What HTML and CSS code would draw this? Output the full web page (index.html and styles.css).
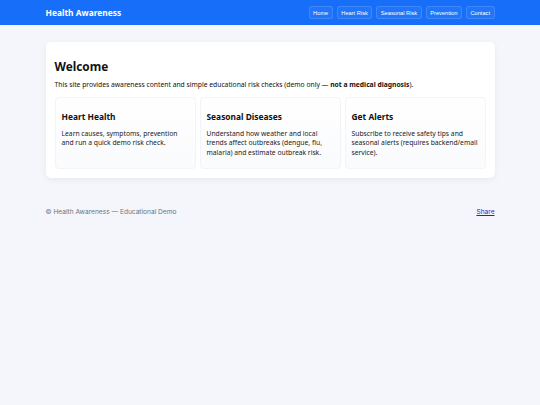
FILE: index.html
```html
<!DOCTYPE html>
<html lang="en">
<head>
    <meta charset="UTF-8">
    <meta name="viewport" content="width=device-width, initial-scale=1.0">
    <title>Health Awareness</title>
    <link rel="stylesheet" href="styles.css">
</head>
<body>
    <header class="topbar">
        <div class="wrap topbar-inner">
            <div class="brand">Health Awareness</div>
            <nav class="nav">
                <button>Home</button>
                <button>Heart Risk</button>
                <button>Seasonal Risk</button>
                <button>Prevention</button>
                <button>Contact</button>
            </nav>
        </div>
    </header>

    <main class="wrap">
        <section class="panel">
            <h1>Welcome</h1>
            <p class="intro">This site provides awareness content and simple educational risk checks (demo only &mdash; <strong>not a medical diagnosis</strong>).</p>

            <div class="grid">
                <div class="card">
                    <h3>Heart Health</h3>
                    <p>Learn causes, symptoms, prevention and run a quick demo risk check.</p>
                </div>
                <div class="card">
                    <h3>Seasonal Diseases</h3>
                    <p>Understand how weather and local trends affect outbreaks (dengue, flu, malaria) and estimate outbreak risk.</p>
                </div>
                <div class="card">
                    <h3>Get Alerts</h3>
                    <p>Subscribe to receive safety tips and seasonal alerts (requires backend/email service).</p>
                </div>
            </div>
        </section>
    </main>

    <footer class="wrap footer">
        <span>&copy; Health Awareness &mdash; Educational Demo</span>
        <a href="#">Share</a>
    </footer>
</body>
</html>
```

FILE: styles.css
```css
body {
    margin: 0;
    background: #f4f6fb;
    font-family: "Noto Sans", sans-serif;
    color: #111;
}
.wrap {
    width: 449px;
    margin: 0 auto;
}
.topbar {
    background: #166ef9;
    height: 25px;
    display: flex;
    align-items: center;
}
.topbar-inner {
    display: flex;
    justify-content: space-between;
    align-items: center;
}
.brand {
    color: #fff;
    font-weight: bold;
    font-size: 8.4px;
}
.nav {
    display: flex;
    gap: 4px;
}
.nav button {
    font-family: "Liberation Sans", Arial, sans-serif;
    font-size: 5.7px;
    color: #fff;
    background: rgba(255, 255, 255, 0.05);
    border: 1px solid rgba(255, 255, 255, 0.14);
    border-radius: 3px;
    height: 13px;
    padding: 0 3.5px;
}
.panel {
    margin-top: 17px;
    background: #fff;
    border-radius: 5px;
    box-shadow: 0 2px 6px rgba(20, 30, 60, 0.06);
    padding: 9px 9px 9px;
}
h1 {
    font-size: 11.8px;
    margin: 7px 0 6px;
}
.intro {
    font-size: 6.75px;
    margin: 0 0 8px;
}
.grid {
    display: grid;
    grid-template-columns: repeat(3, 1fr);
    gap: 4px;
}
.card {
    border: 1px solid #f2f4f8;
    border-radius: 4px;
    background: linear-gradient(#fff, #fafbfd);
    padding: 6px 6px 11px;
}
.card h3 {
    font-size: 8.4px;
    margin: 7px 0 7px;
}
.card p {
    font-size: 6.75px;
    line-height: 9.4px;
    margin: 0;
    color: #222;
}
.footer {
    display: flex;
    justify-content: space-between;
    margin-top: 30px;
    font-family: Inter, sans-serif;
    font-size: 6.6px;
    color: #6b7280;
}
.footer a {
    color: #2a1fd0;
    text-decoration: underline;
}
```
